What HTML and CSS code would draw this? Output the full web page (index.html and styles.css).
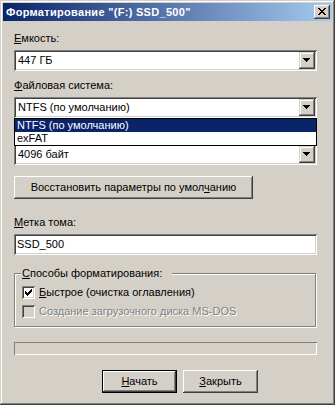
FILE: index.html
```html
<!DOCTYPE html>
<html lang="ru">
<head>
<meta charset="utf-8">
<title>Форматирование</title>
<link rel="stylesheet" href="styles.css">
</head>
<body>
<div class="window">
  <div class="titlebar">
    <span class="title">Форматирование "(F:) SSD_500"</span>
    <span class="caption-btn"><svg width="8" height="7" viewBox="0 0 8 7" shape-rendering="crispEdges"><path d="M0 0h2v1H0zM6 0h2v1H6zM1 1h2v1H1zM5 1h2v1H5zM2 2h4v1H2zM3 3h2v1H3zM2 4h4v1H2zM1 5h2v1H1zM5 5h2v1H5zM0 6h2v1H0zM6 6h2v1H6z"/></svg></span>
  </div>
  <div class="content">
    <div class="label"><u>Е</u>мкость:</div>
    <div class="combo">
      <span class="combo-text">447 ГБ</span>
      <span class="drop-btn"><svg width="7" height="4" viewBox="0 0 7 4" shape-rendering="crispEdges"><path d="M0 0h7v1H0zM1 1h5v1H1zM2 2h3v1H2zM3 3h1v1H3z"/></svg></span>
    </div>
    <div class="label"><u>Ф</u>айловая система:</div>
    <div class="combo">
      <span class="combo-text">NTFS (по умолчанию)</span>
      <span class="drop-btn"><svg width="7" height="4" viewBox="0 0 7 4" shape-rendering="crispEdges"><path d="M0 0h7v1H0zM1 1h5v1H1zM2 2h3v1H2zM3 3h1v1H3z"/></svg></span>
      <div class="list">
        <div class="list-item sel">NTFS (по умолчанию)</div>
        <div class="list-item">exFAT</div>
      </div>
    </div>
    <div class="label label-covered"></div>
    <div class="combo last">
      <span class="combo-text">4096 байт</span>
      <span class="drop-btn"><svg width="7" height="4" viewBox="0 0 7 4" shape-rendering="crispEdges"><path d="M0 0h7v1H0zM1 1h5v1H1zM2 2h3v1H2zM3 3h1v1H3z"/></svg></span>
    </div>
    <button class="btn restore">Восстановить параметры по умол<u>ч</u>анию</button>
    <div class="label gap"><u>М</u>етка тома:</div>
    <div class="textbox">SSD_500</div>
    <fieldset class="group">
      <legend class="group-caption"><u>С</u>пособы форматирования:</legend>
      <div class="check-row">
        <span class="checkbox"><svg width="7" height="7" viewBox="0 0 7 7" shape-rendering="crispEdges"><path d="M0 2h1v3H0zM1 3h1v3H1zM2 4h1v3H2zM3 3h1v3H3zM4 2h1v3H4zM5 1h1v3H5zM6 0h1v3H6z"/></svg></span>
        <span class="check-text"><u>Б</u>ыстрое (очистка оглавления)</span>
      </div>
      <div class="check-row disabled">
        <span class="checkbox"></span>
        <span class="check-text">Создание загрузочного диска MS-DOS</span>
      </div>
    </fieldset>
    <div class="progress"></div>
    <div class="buttons">
      <button class="btn action default"><u>Н</u>ачать</button>
      <button class="btn action"><u>З</u>акрыть</button>
    </div>
  </div>
</div>
</body>
</html>
```
FILE: styles.css
```css
* {
  box-sizing: border-box;
}

html, body {
  margin: 0;
  padding: 0;
}

body {
  background: #d4d0c8;
  font-family: "Liberation Sans", Arial, sans-serif;
  font-size: 11px;
  color: #000;
}

.window {
  width: 335px;
  height: 405px;
  padding: 3px;
  background: #d4d0c8;
  box-shadow: inset -1px -1px 0 #404040, inset 1px 1px 0 #d4d0c8, inset -2px -2px 0 #808080, inset 2px 2px 0 #fff;
  display: flex;
  flex-direction: column;
}

.titlebar {
  height: 18px;
  flex: none;
  display: flex;
  align-items: center;
  padding: 0 2px 0 3px;
  background: linear-gradient(90deg, #0a246a, #a6caf0);
}

.title {
  flex: 1;
  color: #fff;
  font-weight: bold;
  letter-spacing: 0.3px;
  white-space: nowrap;
  line-height: 18px;
}

.caption-btn {
  width: 16px;
  height: 14px;
  display: block;
  padding: 3px 0 0 4px;
  background: #d4d0c8;
  box-shadow: inset -1px -1px 0 #404040, inset 1px 1px 0 #fff, inset -2px -2px 0 #808080, inset 2px 2px 0 #d4d0c8;
}

.caption-btn svg,
.drop-btn svg,
.checkbox svg {
  display: block;
}

.content {
  flex: 1;
  padding: 11px 15px 0 11px;
  display: flex;
  flex-direction: column;
}

.label {
  height: 13px;
  line-height: 13px;
  margin-bottom: 5px;
  white-space: nowrap;
}

.label.gap {
  margin-top: 17px;
}

.combo,
.textbox {
  height: 21px;
  background: #fff;
  box-shadow: inset 1px 1px 0 #808080, inset -1px -1px 0 #fff, inset 2px 2px 0 #404040, inset -2px -2px 0 #d4d0c8;
}

.combo {
  position: relative;
  display: flex;
  align-items: center;
  padding: 2px;
  margin-bottom: 8px;
}

.combo.last {
  margin-bottom: 0;
}

.combo-text {
  flex: 1;
  padding-left: 2px;
  line-height: 13px;
  white-space: nowrap;
}

.drop-btn {
  width: 16px;
  height: 17px;
  flex: none;
  display: block;
  padding: 6px 0 0 4px;
  background: #d4d0c8;
  box-shadow: inset -1px -1px 0 #404040, inset 1px 1px 0 #d4d0c8, inset -2px -2px 0 #808080, inset 2px 2px 0 #fff;
}

.list {
  position: absolute;
  top: 21px;
  left: 0;
  width: 303px;
  border: 1px solid #000;
  background: #fff;
  z-index: 2;
}

.list-item {
  height: 13px;
  line-height: 13px;
  padding-left: 2px;
  white-space: nowrap;
}

.list-item.sel {
  background: #0a246a;
  color: #fff;
}

.btn {
  height: 23px;
  padding: 0;
  border: none;
  background: #d4d0c8;
  font: inherit;
  color: #000;
  line-height: 13px;
  box-shadow: inset -1px -1px 0 #404040, inset 1px 1px 0 #fff, inset -2px -2px 0 #808080, inset 2px 2px 0 #d4d0c8;
}

.restore {
  width: 239px;
  margin-top: 11px;
}

.textbox {
  padding: 0 0 0 3px;
  line-height: 21px;
  margin-bottom: 12px;
}

.group {
  width: 302px;
  min-width: 0;
  margin: 0 0 15px 0;
  padding: 6px 0 8px 7px;
  border: 1px solid #808080;
  box-shadow: 1px 1px 0 #fff, inset 1px 1px 0 #fff;
}

.group-caption {
  padding: 0 10px 0 1px;
  margin-left: -1px;
  line-height: 13px;
  background: #d4d0c8;
}

.check-row {
  display: flex;
  align-items: center;
  gap: 4px;
  height: 13px;
  line-height: 13px;
  white-space: nowrap;
}

.check-row + .check-row {
  margin-top: 6px;
}

.checkbox {
  width: 13px;
  height: 13px;
  flex: none;
  padding: 3px;
  background: #fff;
  box-shadow: inset 1px 1px 0 #808080, inset -1px -1px 0 #fff, inset 2px 2px 0 #404040, inset -2px -2px 0 #d4d0c8;
}

.check-row.disabled .checkbox {
  background: #d4d0c8;
}

.check-row.disabled .check-text {
  color: #808080;
  text-shadow: 1px 1px 0 #fff;
}

.progress {
  height: 13px;
  box-shadow: inset 1px 1px 0 #808080, inset -1px -1px 0 #fff;
  margin-bottom: 15px;
}

.buttons {
  display: flex;
  gap: 6px;
  padding-left: 88px;
}

.action {
  width: 75px;
}

.action.default {
  border: 1px solid #000;
}
```
